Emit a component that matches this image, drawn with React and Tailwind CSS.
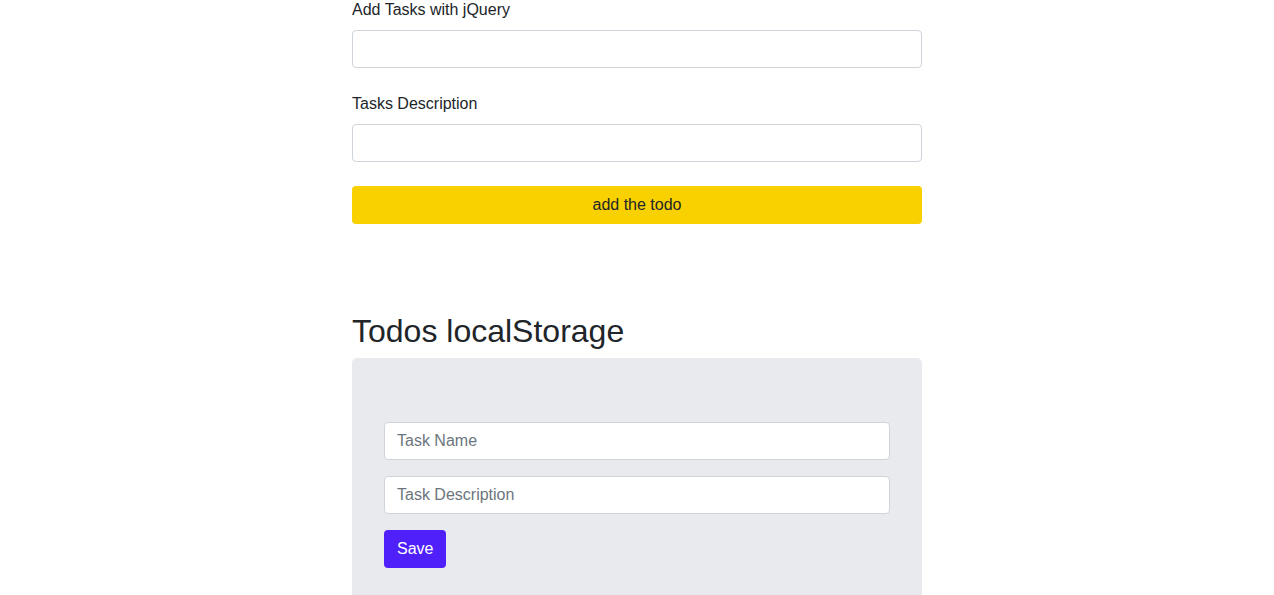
import React from "react";

const font = { fontFamily: '"Liberation Sans", Arial, sans-serif' };

const inputCls =
  "block w-full h-[38px] px-3 rounded-[4px] border border-[#ced4da] bg-white text-base text-[#495057] placeholder:text-[#6c757d] outline-none";

const App = () => {
  return (
    <div
      className="w-full min-h-[595px] bg-white text-[#212529] overflow-hidden font-['Liberation_Sans',Arial,sans-serif]"
      style={font}
    >
      <div className="w-[570px] mx-auto">
        <form className="-mt-[2px]" onSubmit={(e) => e.preventDefault()}>
          <div className="mb-6">
            <label className="block text-base leading-6 mb-2">Add Tasks with jQuery</label>
            <input type="text" className={inputCls} />
          </div>
          <div className="mb-6">
            <label className="block text-base leading-6 mb-2">Tasks Description</label>
            <input type="text" className={inputCls} />
          </div>
          <button
            type="submit"
            className="block w-full h-[38px] rounded-[4px] bg-[#f9d000] text-base text-[#212529]"
          >
            add the todo
          </button>
        </form>

        <h2 className="mt-[88px] mb-2 text-[32px] leading-[1.2] font-normal text-[#212529]">
          Todos localStorage
        </h2>

        <div className="bg-[#e9eaee] rounded-[5px] px-8 pt-16 pb-16">
          <form className="flex flex-col gap-4" onSubmit={(e) => e.preventDefault()}>
            <input type="text" placeholder="Task Name" className={inputCls} />
            <input type="text" placeholder="Task Description" className={inputCls} />
            <div>
              <button
                type="submit"
                className="h-[38px] px-[13px] rounded-[4px] bg-[#5020fa] text-white text-base"
              >
                Save
              </button>
            </div>
          </form>
        </div>
      </div>
    </div>
  );
};

export default App;
